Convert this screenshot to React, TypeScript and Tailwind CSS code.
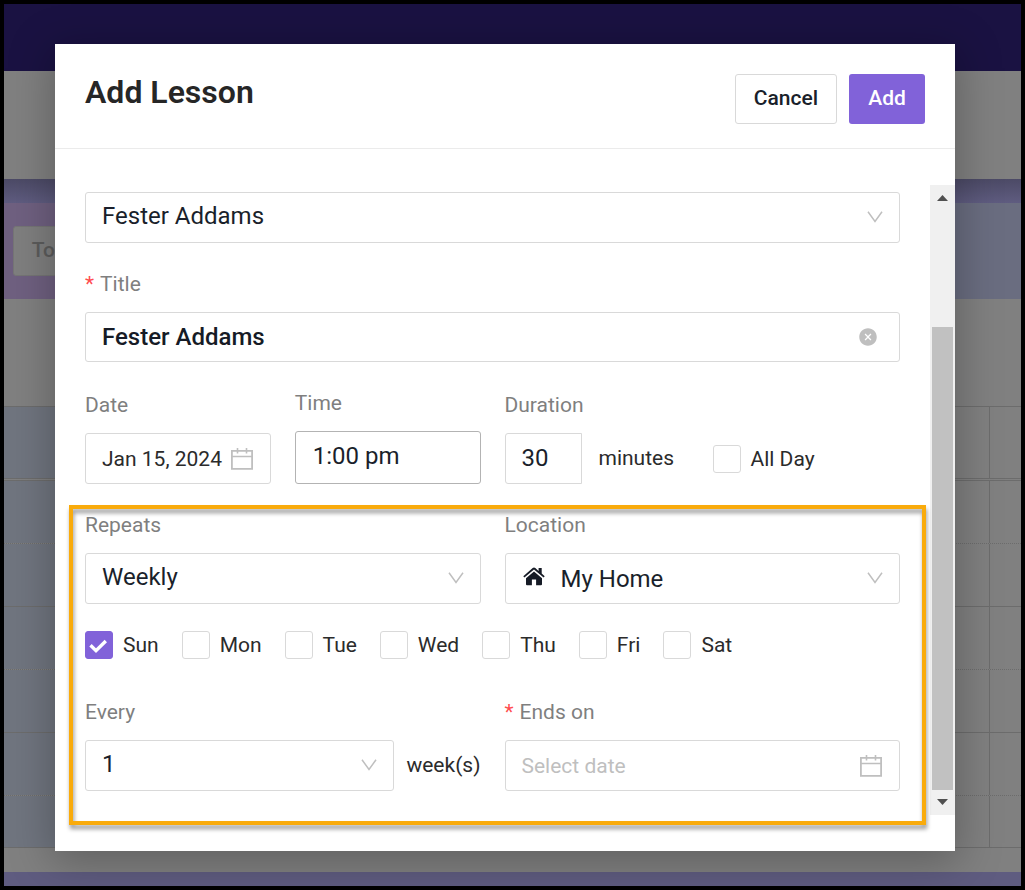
import React, { useState } from 'react'
import { AiFillCloseCircle } from 'react-icons/ai'

/* ===== ICONS ===== */

function ChevronIcon() {
    return (
        <svg width="16" height="12" viewBox="0 0 16 12" fill="none" stroke="#bfbfbf" strokeWidth="1.5">
            <path d="M1 0.8 L8 10.4 L15 0.8" />
        </svg>
    )
}

function CalendarIcon() {
    return (
        <svg width="22" height="22" viewBox="0 0 22 22" fill="none" stroke="#bfbfbf" strokeWidth="1.8">
            <path d="M0.9 2.9 H21.1 V20.8 H0.9 Z" />
            <path d="M0.9 8.5 H21.1" strokeWidth="1.5" />
            <path d="M6.5 0 V5.6 M15.5 0 V5.6" strokeWidth="1.6" />
        </svg>
    )
}

function HomeIcon() {
    return (
        <svg width="22" height="19" viewBox="0 0 22 19" fill="#161b26">
            <path d="M11 4.6 L19 11.2 V17.3 Q19 18.3 18 18.3 H13.1 V12.6 H8.9 V18.3 H4 Q3 18.3 3 17.3 V11.2 Z" />
            <path d="M0.3 9.2 L9.7 1.1 Q11 0.1 12.3 1.1 L15.6 3.9 V0.9 H18.7 V6.5 L21.7 9.2 L20.6 10.5 L11 2.4 L1.4 10.5 Z" />
        </svg>
    )
}

/* ===== FIELDS ===== */

interface LabelProps {
    htmlFor: string
    required?: boolean
    children: React.ReactNode
}

function Label({ htmlFor, required, children }: LabelProps) {
    return (
        <label htmlFor={htmlFor} className="mb-4 block text-[21px] leading-6 text-[#7f7f7f]">
            {required && <span className="mr-1.5 text-[#ff4d4f]">*</span>}
            {children}
        </label>
    )
}

interface SelectProps {
    id: string
    options: string[]
    label?: string
    icon?: React.ReactNode
}

function Select({ id, options, label, icon }: SelectProps) {
    return (
        <div className="relative flex-1">
            {icon && <span className="pointer-events-none absolute top-3.5 left-[18px]">{icon}</span>}
            <select
                id={id}
                aria-label={label}
                className={
                    'block h-[51px] w-full appearance-none rounded-[3px] border border-[#d9d9d9] bg-white pr-12 text-2xl text-[#1a1f2b] outline-none ' +
                    (icon ? 'pl-[55px]' : 'pb-1 pl-4')
                }
            >
                {options.map((o) => <option key={o}>{o}</option>)}
            </select>
            <span className="pointer-events-none absolute top-[19px] right-[17px]">
                <ChevronIcon />
            </span>
        </div>
    )
}

interface DateInputProps {
    id: string
    value?: string
    placeholder?: string
}

function DateInput({ id, value, placeholder }: DateInputProps) {
    return (
        <div className="flex h-[51px] items-center rounded-[3px] border border-[#d9d9d9] pr-[17px] pl-4">
            <input
                id={id}
                type="text"
                defaultValue={value}
                placeholder={placeholder}
                className="w-full min-w-0 flex-1 pt-0.5 text-[21px] text-[#2b2b2b] outline-none placeholder:text-[#bfbfbf]"
            />
            <CalendarIcon />
        </div>
    )
}

function Checkbox({ label, checked = false }: { label: string; checked?: boolean }) {
    return (
        <label className="flex items-center gap-2.5 text-[21px] leading-7 text-[#2b2b2b]">
            <span className="grid size-7">
                <input
                    type="checkbox"
                    defaultChecked={checked}
                    className="peer col-start-1 row-start-1 size-7 appearance-none rounded-[3px] border border-[#d9d9d9] bg-white checked:border-[#8162d9] checked:bg-[#8162d9]"
                />
                <svg
                    className="pointer-events-none invisible col-start-1 row-start-1 peer-checked:visible"
                    width="28" height="28" viewBox="0 0 28 28" fill="none" stroke="#fff" strokeWidth="3.4"
                >
                    <path d="M5.5 14.2 L11 19.6 L20.8 10" />
                </svg>
            </span>
            {label}
        </label>
    )
}

/* ===== CALENDAR PAGE behind the dialog ===== */

const HOURS = [
    'h-[72px] border-t border-solid',
    'h-[65px] border-t-[3px] border-double',
    'h-[63px] border-t border-dotted',
    'h-[63px] border-t border-solid',
    'h-[63px] border-t border-dotted',
    'h-[63px] border-t border-solid',
    'h-[52px] border-t border-dotted',
    'h-px border-t border-solid',
]

function CalendarPage() {
    return (
        <div aria-hidden="true" className="col-start-1 row-start-1 flex min-w-0 flex-col bg-[#808080]">
            <div className="h-[67px] bg-[#1a1242]" />
            <div className="h-[108px]" />
            <div className="h-6 bg-linear-to-b from-[#4c4a66] to-[#5f5c80]" />
            <div className="flex h-24">
                <div className="flex-1 bg-[#6f6080] pt-[23px] pl-[9px]">
                    <button tabIndex={-1} className="h-[50px] w-[94px] rounded-[3px] border border-[#757575] bg-[#7f7f7f] text-[21px] font-medium text-[#5c5c5c]">
                        Today
                    </button>
                </div>
                <div className="flex-1 bg-[#6a6d80]" />
            </div>
            <div className="h-[107px]" />
            {HOURS.map((row, i) => (
                <div key={i} className={'flex border-[#6c6c6c] ' + row}>
                    <div className="flex-1 bg-[#70757f]" />
                    <div className="flex-1" />
                    <div className="w-8 border-l border-solid border-[#6c6c6c]" />
                </div>
            ))}
            <div className="min-h-6 flex-1" />
            <div className="h-3.5 bg-[#5f5c80]" />
        </div>
    )
}

/* ===== SCROLLBAR ===== */

function Scrollbar() {
    return (
        <div aria-hidden="true" className="flex w-[25px] flex-col items-center bg-[#f0f0f0]">
            <svg width="25" height="25" viewBox="0 0 25 25" fill="#505050">
                <path d="M7 16 L12.5 10 L18 16 Z" />
            </svg>
            <div className="h-[117px]" />
            <div className="w-[21px] flex-1 bg-[#c1c1c1]" />
            <svg width="25" height="25" viewBox="0 0 25 25" fill="#505050">
                <path d="M7 9 L12.5 15 L18 9 Z" />
            </svg>
        </div>
    )
}

const DAYS = ['Sun', 'Mon', 'Tue', 'Wed', 'Thu', 'Fri', 'Sat']

export default function App() {
    const [title, setTitle] = useState('Fester Addams')

    return (
        <div className="grid min-h-screen border-4 border-black font-['Roboto',sans-serif]">
            <CalendarPage />

            <div className="col-start-1 row-start-1 min-w-0 pt-10 pr-[66px] pb-[35px] pl-[51px]">
                <form
                    role="dialog"
                    aria-labelledby="dialog-title"
                    onSubmit={(e) => e.preventDefault()}
                    className="relative bg-white shadow-[0_8px_40px_4px_rgba(0,0,0,0.25)]"
                >
                    <header className="flex items-start justify-between border-b border-[#ebebeb] px-[30px] pt-[30px] pb-6">
                        <h1 id="dialog-title" className="text-[32px] leading-9 font-semibold text-[#262626]">Add Lesson</h1>
                        <div className="flex gap-3">
                            <button type="button" className="h-[50px] w-[102px] rounded-[3px] border border-[#d9d9d9] text-[21px] font-medium text-[#1a1f2b]">
                                Cancel
                            </button>
                            <button type="submit" className="h-[50px] w-[76px] rounded-[3px] bg-[#8162d9] text-[21px] font-medium text-white">
                                Add
                            </button>
                        </div>
                    </header>

                    <div className="flex py-9">
                        <div className="min-w-0 flex-1 px-[30px] pt-[7px] pb-6">
                            <div className="flex">
                                <Select id="student" label="Student" options={['Fester Addams']} />
                            </div>

                            <div className="mt-[29px]">
                                <Label htmlFor="title" required>Title</Label>
                                <div className="flex h-[50px] items-center rounded-[3px] border border-[#d9d9d9] pr-[21px] pl-4">
                                    <input
                                        id="title"
                                        type="text"
                                        value={title}
                                        onChange={(e) => setTitle(e.target.value)}
                                        className="min-w-0 flex-1 text-2xl font-medium text-[#161b26] outline-none"
                                    />
                                    <button type="button" aria-label="Clear title" onClick={() => setTitle('')}>
                                        <AiFillCloseCircle size={20} color="#bfbfbf" />
                                    </button>
                                </div>
                            </div>

                            <div className="mt-[31px] grid grid-cols-2 items-end gap-6">
                                <div className="grid grid-cols-2 items-end gap-6">
                                    <div>
                                        <Label htmlFor="date">Date</Label>
                                        <DateInput id="date" value="Jan 15, 2024" />
                                    </div>
                                    <div className="-mt-0.5">
                                        <Label htmlFor="time">Time</Label>
                                        <input
                                            id="time"
                                            type="text"
                                            defaultValue="1:00 pm"
                                            className="block h-[53px] w-full rounded-[3px] border border-[#b3b3b3] pb-1 pl-[17px] text-2xl text-[#1a1f2b] outline-none"
                                        />
                                    </div>
                                </div>
                                <div>
                                    <Label htmlFor="duration">Duration</Label>
                                    <div className="flex items-center">
                                        <input
                                            id="duration"
                                            type="text"
                                            defaultValue="30"
                                            className="h-[51px] w-[77px] rounded-l-[3px] border border-[#d9d9d9] pb-0.5 pl-4 text-2xl text-[#1a1f2b] outline-none"
                                        />
                                        <span className="w-[131px] pl-[17px] text-[21px] text-[#2b2b2b]">minutes</span>
                                        <Checkbox label="All Day" />
                                    </div>
                                </div>
                            </div>

                            {/* Recurrence block, outlined by the callout */}
                            <div className="relative mt-[29px]">
                                <div className="grid grid-cols-2 gap-6">
                                    <div>
                                        <Label htmlFor="repeats">Repeats</Label>
                                        <Select id="repeats" options={['Weekly', 'Daily', 'Monthly']} />
                                    </div>
                                    <div>
                                        <Label htmlFor="location">Location</Label>
                                        <Select id="location" options={['My Home']} icon={<HomeIcon />} />
                                    </div>
                                </div>

                                <div className="mt-[27px] flex flex-wrap gap-x-[23px]">
                                    {DAYS.map((day) => <Checkbox key={day} label={day} checked={day === 'Sun'} />)}
                                </div>

                                <div className="mt-[41px] grid grid-cols-2 gap-6">
                                    <div>
                                        <Label htmlFor="every">Every</Label>
                                        <div className="flex items-center gap-3">
                                            <Select id="every" options={['1', '2', '3', '4']} />
                                            <span className="text-[21px] text-[#2b2b2b]">week(s)</span>
                                        </div>
                                    </div>
                                    <div>
                                        <Label htmlFor="ends-on" required>Ends on</Label>
                                        <DateInput id="ends-on" placeholder="Select date" />
                                    </div>
                                </div>

                                <div className="pointer-events-none absolute -top-2 -right-[26px] -bottom-[34px] -left-4 border-4 border-[#f9ab0c] drop-shadow-[1px_4px_2px_rgba(0,0,0,0.4)]" />
                            </div>
                        </div>
                        <Scrollbar />
                    </div>
                </form>
            </div>
        </div>
    )
}
